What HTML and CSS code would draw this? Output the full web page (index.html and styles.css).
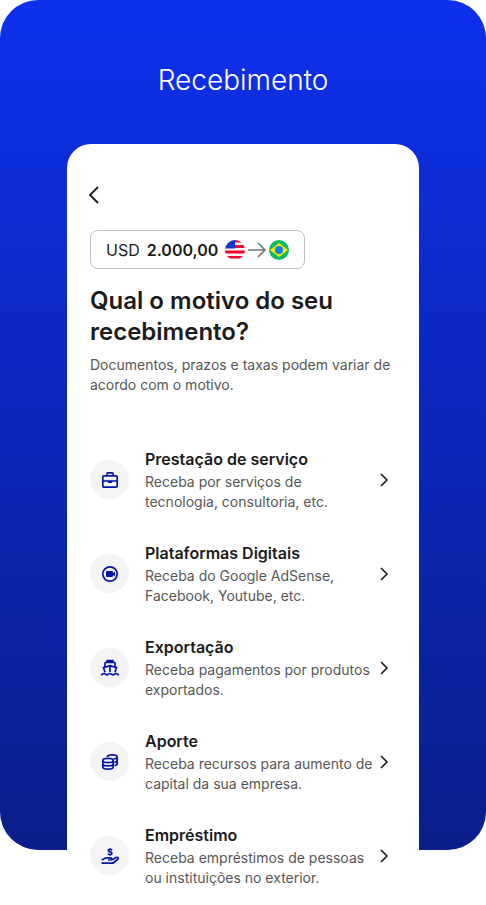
FILE: index.html
```html
<!DOCTYPE html>
<html lang="pt-BR">
<head>
<meta charset="utf-8">
<meta name="viewport" content="width=device-width, initial-scale=1">
<title>Recebimento</title>
<link rel="stylesheet" href="styles.css">
</head>
<body>
<main class="showcase">
  <h1 class="showcase-title">Recebimento</h1>
  <section class="screen">
    <button class="back" type="button" aria-label="Voltar">
      <svg width="12" height="18" viewBox="0 0 12 18" fill="none" stroke="#1b1b1b" stroke-width="1.8"><path d="M10 1 2 9l8 8"/></svg>
    </button>
    <div class="amount">
      <span class="currency">USD</span>
      <strong class="value">2.000,00</strong>
      <span class="route">
        <svg width="20" height="20" viewBox="0 0 20 20">
          <clipPath id="us"><circle cx="10" cy="10" r="10"/></clipPath>
          <g clip-path="url(#us)"><path fill="#f7f5f6" d="M0 0h20v20H0z"/><path fill="#f0082c" d="M9 0h11v2.500H9zM9 5h11v3H9zM0 10.500h20v3H0zM0 16h20v2.500H0z"/><path fill="#0b37c8" d="M0 0h10v8.500H0z"/></g>
        </svg>
        <svg width="20" height="20" viewBox="0 0 20 20" fill="none" stroke="#757575" stroke-width="1.6"><path d="M1 10h17M11 3l7 7-7 7"/></svg>
        <svg width="20" height="20" viewBox="0 0 20 20"><circle cx="10" cy="10" r="10" fill="#0dbb63"/><path fill="#ffe600" d="m10 3 9 7-9 7-9-7z"/><circle cx="10" cy="10" r="4" fill="#0d7df2"/></svg>
      </span>
    </div>
    <h2 class="question">Qual o motivo do seu recebimento?</h2>
    <p class="hint">Documentos, prazos e taxas podem variar de acordo com o motivo.</p>
    <ul class="reasons">
      <li><a class="reason" href="#servico">
        <span class="badge"><svg class="icon" viewBox="0 0 20 20"><rect x="2.800" y="5.800" width="14.400" height="11.400" rx="1.200"/><path d="M7 5.500V3.600Q7 2.800 7.800 2.800h4.400q.8 0 .8.8v1.900M3 11h14"/><path class="solid" d="M7.800 11h4.400v.8q0 1.200-1.200 1.200H9q-1.200 0-1.200-1.200z"/></svg></span>
        <span class="copy"><strong class="name">Prestação de serviço</strong><span class="detail">Receba por serviços de tecnologia, consultoria, etc.</span></span>
        <svg class="chevron" viewBox="0 0 9 14"><path d="m1 1 6 6-6 6"/></svg>
      </a></li>
      <li><a class="reason" href="#plataformas">
        <span class="badge"><svg class="icon" viewBox="0 0 20 20"><circle cx="10" cy="10" r="7.200"/><path class="solid" d="M7 7h5q1 0 1 1v1l2-1.500v5L13 11v1q0 1-1 1H7q-1 0-1-1V8q0-1 1-1z"/></svg></span>
        <span class="copy"><strong class="name">Plataformas Digitais</strong><span class="detail">Receba do Google AdSense, Facebook, Youtube, etc.</span></span>
        <svg class="chevron" viewBox="0 0 9 14"><path d="m1 1 6 6-6 6"/></svg>
      </a></li>
      <li><a class="reason" href="#exportacao">
        <span class="badge"><svg class="icon" viewBox="0 0 20 20"><path d="M7.200 4V2.700h5.600V4M5 8.500V5.300q0-1 1-1h8q1 0 1 1v3.200M5 14.200 3.500 9.600 10 7.600l6.500 2L15 14.200M10 7.600V14M1 16.800c1.500 0 1.500-1.300 3-1.300s1.500 1.300 3 1.300 1.500-1.300 3-1.300 1.500 1.300 3 1.300 1.500-1.300 3-1.300 1.500 1.300 3 1.300"/></svg></span>
        <span class="copy"><strong class="name">Exportação</strong><span class="detail">Receba pagamentos por produtos exportados.</span></span>
        <svg class="chevron" viewBox="0 0 9 14"><path d="m1 1 6 6-6 6"/></svg>
      </a></li>
      <li><a class="reason" href="#aporte">
        <span class="badge"><svg class="icon" viewBox="0 0 20 20"><ellipse cx="8" cy="8.500" rx="5.200" ry="2.100"/><path d="M2.800 8.500v6.600c0 1.200 2.300 2.100 5.200 2.100s5.200-.9 5.200-2.100V8.500M2.800 11.800c0 1.200 2.300 2.100 5.200 2.100s5.200-.9 5.200-2.100M7 4.800c.5-1.200 2.500-2 5-2 2.900 0 5.200.9 5.200 2.100S15.500 6.800 13.500 7M17.200 5v6.800c0 .8-1.200 1.600-2.600 1.900M17.200 8.500c0 .8-1.200 1.600-2.800 1.900"/></svg></span>
        <span class="copy"><strong class="name">Aporte</strong><span class="detail">Receba recursos para aumento de capital da sua empresa.</span></span>
        <svg class="chevron" viewBox="0 0 9 14"><path d="m1 1 6 6-6 6"/></svg>
      </a></li>
      <li><a class="reason" href="#emprestimo">
        <span class="badge"><svg class="icon" viewBox="0 0 20 20"><path d="M12 4.200q-.6-.8-2-.8-1.800 0-1.800 1.200T10 5.900t1.900 1.400Q11.900 8.500 10 8.500q-1.500 0-2-.9M10 2.200v1.200M10 8.500v1.200M1.500 13.500h1.700c1-1.400 2.300-1.700 3.800-1.700h3.500c1.500 0 1.500 2.200 0 2.200H8M12 13.800l4-2.200c1.800-1 3 .8 1.600 1.900L13.800 16.500q-.8.700-1.800.7H1.500"/></svg></span>
        <span class="copy"><strong class="name">Empréstimo</strong><span class="detail">Receba empréstimos de pessoas ou instituições no exterior.</span></span>
        <svg class="chevron" viewBox="0 0 9 14"><path d="m1 1 6 6-6 6"/></svg>
      </a></li>
    </ul>
  </section>
</main>
</body>
</html>
```
FILE: styles.css
```css
* {
  box-sizing: border-box;
}

body {
  margin: 0;
  background: #fff;
  color: #1b1b1b;
  font-family: Inter, "Liberation Sans", sans-serif;
}

.showcase {
  position: relative;
  isolation: isolate;
  display: flex;
  flex-direction: column;
  align-items: center;
  padding-top: 60px;
}

.showcase::before {
  content: "";
  position: absolute;
  z-index: -1;
  inset: 0 0 55px;
  border-radius: 38px;
  background: linear-gradient(#0e30ec, #0a1e8a);
}

.showcase-title {
  margin: 0 0 44px;
  color: #fff;
  font-size: 28px;
  font-weight: 300;
  line-height: 40px;
}

.screen {
  width: 100%;
  max-width: 352px;
  padding: 40px 23px 17px;
  border-radius: 24px;
  background: #fff;
}

.back {
  display: flex;
  margin: 0 0 24px -4px;
  padding: 2px;
  border: 0;
  background: none;
}

.amount {
  display: flex;
  align-items: center;
  gap: 7px;
  width: fit-content;
  height: 39px;
  padding: 0 15px;
  border: 1px solid #bdbdbd;
  border-radius: 8px;
  font-size: 16px;
}

.value {
  font-weight: 600;
}

.route {
  display: flex;
  align-items: center;
  gap: 2px;
}

.question {
  margin: 16px 0 8px;
  font-size: 24px;
  font-weight: 600;
  line-height: 31px;
}

.hint {
  margin: 0 0 52px;
  color: #575757;
  font-size: 14px;
  line-height: 20px;
}

.reasons {
  display: grid;
  gap: 29px;
  margin: 0;
  padding: 0;
  list-style: none;
}

.reason {
  display: flex;
  align-items: center;
  color: inherit;
  text-decoration: none;
}

.badge {
  display: grid;
  flex: none;
  place-items: center;
  width: 39px;
  height: 39px;
  margin-right: 16px;
  border-radius: 50%;
  background: #f4f4f4;
}

.icon {
  width: 20px;
  height: 20px;
  fill: none;
  stroke: #0514a0;
  stroke-width: 1.7;
}

.icon .solid {
  fill: #0514a0;
  stroke: none;
}

.copy {
  display: grid;
  flex: 1;
  gap: 1px;
}

.name {
  font-size: 16px;
  font-weight: 600;
  line-height: 24px;
}

.detail {
  color: #575757;
  font-size: 14px;
  line-height: 20px;
}

.chevron {
  flex: none;
  width: 9px;
  height: 14px;
  margin: 0 7px 0 4px;
  fill: none;
  stroke: #1b1b1b;
  stroke-width: 1.6;
}
```
